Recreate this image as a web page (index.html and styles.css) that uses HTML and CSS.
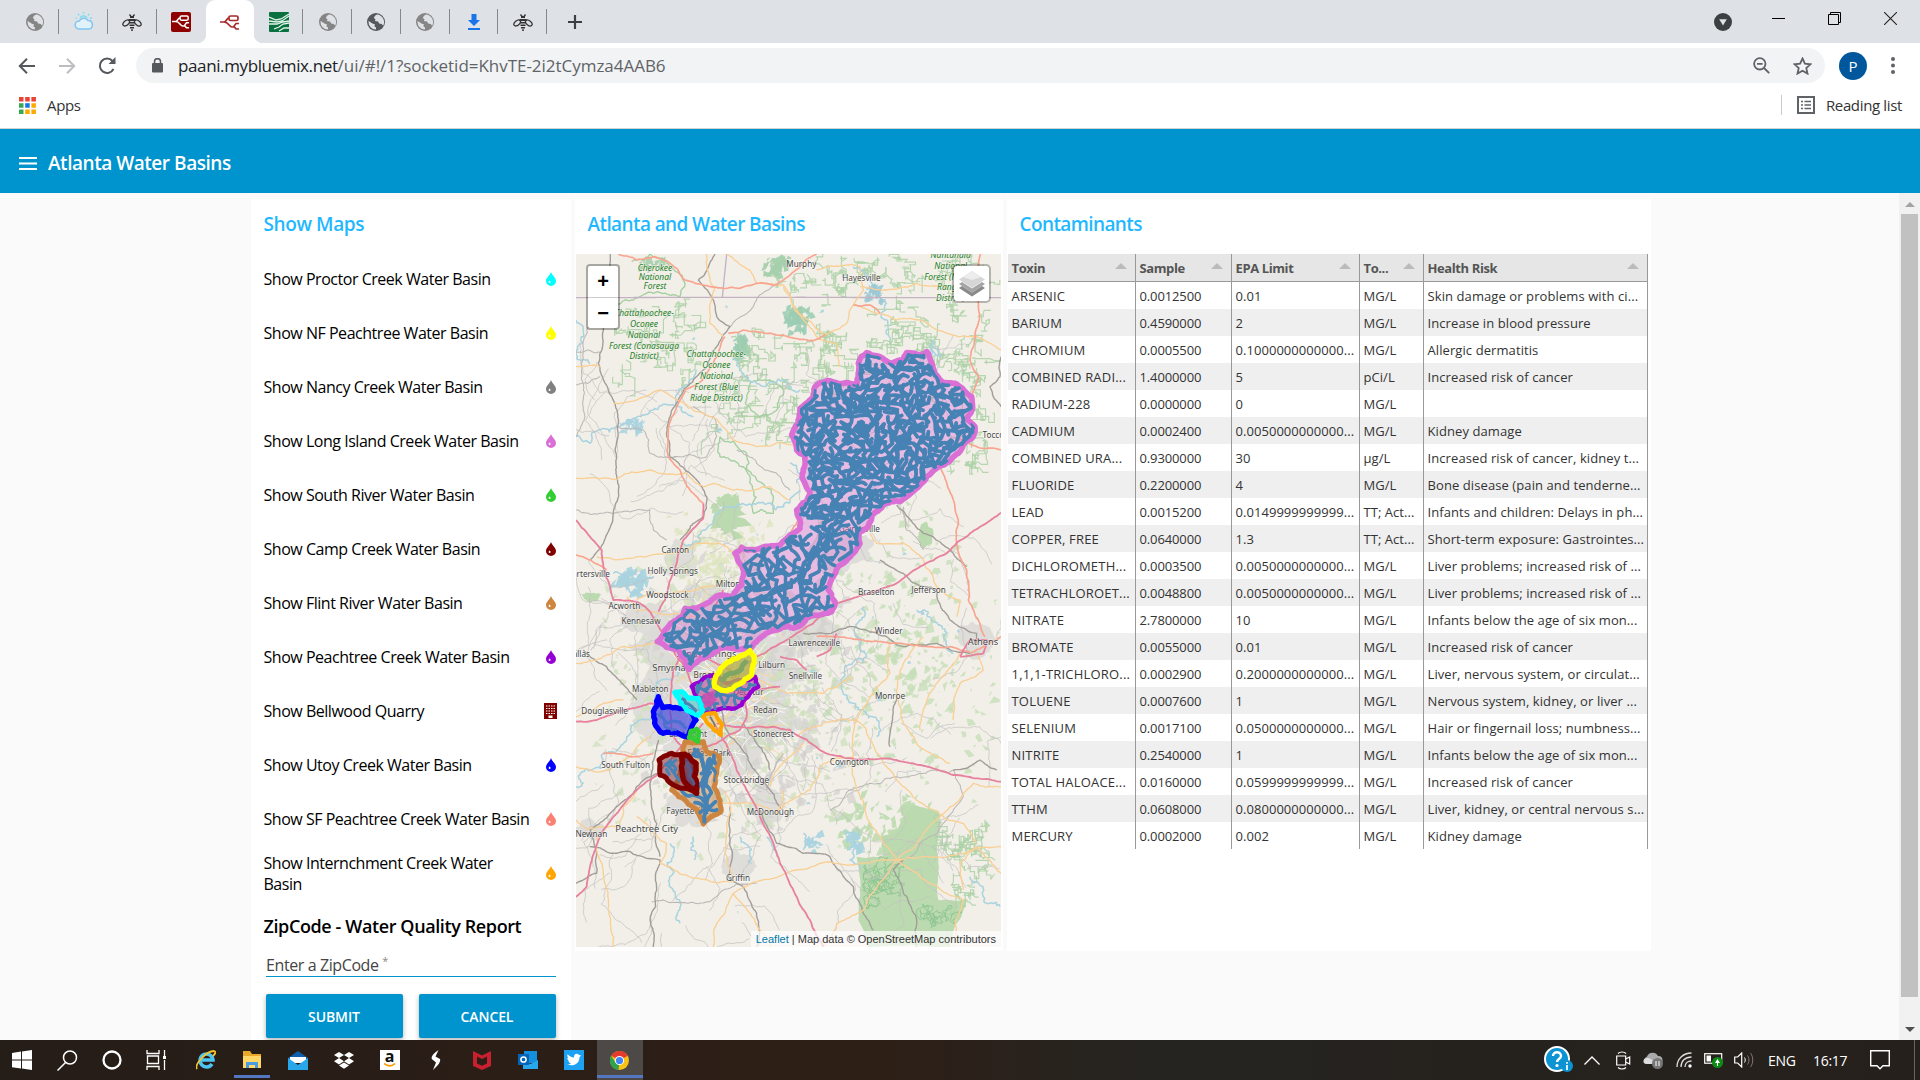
FILE: index.html
```html
<!DOCTYPE html>
<html lang="en">
<head>
<meta charset="utf-8">
<title>Atlanta Water Basins</title>
<link rel="stylesheet" href="styles.css">
</head>
<body>
<svg class="defs" width="0" height="0" aria-hidden="true">
  <symbol id="drop" viewBox="0 0 10 14"><path fill="currentColor" d="M5 0C5.6 2.700 10 5.800 10 9a5 5 0 0 1-10 0C0 5.800 4.400 2.700 5 0z"/><path fill="#fff" d="M3.700 8.200c.2.700.9 1.100.9 1.900a1 1 0 0 1-2 0c0-.8.9-1.200 1.100-1.900z"/></symbol>
  <symbol id="globe" viewBox="0 0 18 18"><circle cx="9" cy="9" r="9" fill="currentColor"/><path fill="#dee1e6" d="M10 1.600c-2 1-2.500 2-3.200 3.300l1.700 1.300-.6 1.700 3.200.5 1 2 2.700.6 1.300 1.800A7.500 7.500 0 0 0 10 1.600zM1.600 8l4.300 2.700 2 .6-.5 2 1.600 1.200v2A7.500 7.500 0 0 1 1.600 8z"/></symbol>
  <symbol id="bee" viewBox="0 0 20 18"><g fill="none" stroke="#333" stroke-width="1.300"><ellipse cx="4.200" cy="10" rx="3.800" ry="2.300" transform="rotate(-40 4.200 10)"/><ellipse cx="15.800" cy="10" rx="3.800" ry="2.300" transform="rotate(40 15.800 10)"/><path d="M7.500 1.500l1.500 2M12.500 1.500l-1.500 2"/></g><path fill="#333" d="M8 3h4v2H8zM6.500 6h7v2h-7zM7.500 9h5v1.500h-5zM7.500 11.500h5V13h-5zM8 14h4v1.400H8zM9.200 16.200h1.600V18H9.200z"/></symbol>
  <symbol id="flow" viewBox="0 0 20 16"><g fill="none" stroke="currentColor" stroke-width="1.700"><rect x="9" y="2" width="9" height="4.500" rx="1.500"/><path d="M0 8h4c3 0 2-4 5-4M4 8c5 0 5 5 8 5h2M19 9.500h-3l-2 2.800 2 2.700h3"/></g></symbol>
</svg>

<header class="browser">
  <div class="tabs">
    <div class="tab"><svg class="ico gl" ><use href="#globe"/></svg></div>
    <div class="tab"><svg class="ico20" viewBox="0 0 20 20"><path d="M5 17a4 4 0 0 1 .3-8A5 5 0 0 1 14 8.500a4.300 4.300 0 0 1 1 8.500z" fill="#e2f2fb" stroke="#83c5ef" stroke-width="1.500"/><path d="M6 6a4 4 0 0 1 7 0M9.500 0v1.800M4 2l1 1.300M15 2l-1 1.300M1.500 6l1.500.5M18 6l-2 .5" stroke="#6fdff0" stroke-width="1.300" fill="none"/></svg></div>
    <div class="tab"><svg class="ico20"><use href="#bee"/></svg></div>
    <div class="tab nosep"><span class="nr"><svg width="18" height="15"><use href="#flow"/></svg></span></div>
    <div class="tab active"><svg class="red" width="20" height="16"><use href="#flow"/></svg></div>
    <div class="tab"><svg class="ico20" viewBox="0 0 20 20"><rect width="20" height="20" rx="1" fill="#08713f"/><path d="M0 5l7 3 5-1 8-5M0 9l8 1 5-1 7-5M0 12h8l6-2 6-1M5 17l5-2 4-3 6-1M10 19l5-3h5" stroke="#e4f5ea" stroke-width="1.300" fill="none"/></svg></div>
    <div class="tab"><svg class="ico gl"><use href="#globe"/></svg></div>
    <div class="tab"><svg class="ico gd"><use href="#globe"/></svg></div>
    <div class="tab"><svg class="ico gl"><use href="#globe"/></svg></div>
    <div class="tab"><svg class="ico" viewBox="0 0 18 18"><path fill="#1a73e8" d="M6.500 1h5v6H15l-6 6-6-6h3.500zM3 15h12v2H3z"/></svg></div>
    <div class="tab"><svg class="ico20"><use href="#bee"/></svg></div>
    <div class="plus"><svg width="14" height="14" viewBox="0 0 14 14"><path d="M7 0v14M0 7h14" stroke="#3c4043" stroke-width="2.200"/></svg></div>
    <div class="winbtns">
      <svg class="media" width="18" height="18" viewBox="0 0 18 18"><circle cx="9" cy="9" r="9" fill="#3c4043"/><path d="M5.200 6.200h7.600L9 12.500z" fill="#dee1e6"/></svg>
      <svg width="13" height="13" viewBox="0 0 13 13"><path d="M0 6.500h13" stroke="#000"/></svg>
      <svg width="13" height="13" viewBox="0 0 13 13"><path d="M.5 2.500h10v10H.5zM2.500 2.500v-2h10v10h-2" fill="none" stroke="#000"/></svg>
      <svg width="13" height="13" viewBox="0 0 13 13"><path d="M0 0l13 13M13 0L0 13" stroke="#222" stroke-width="1.100"/></svg>
    </div>
  </div>
  <div class="toolbar">
    <div class="nav">
      <svg width="18" height="16" viewBox="0 0 18 16"><path d="M17 8H2M9 .8L1.800 8 9 15.200" fill="none" stroke="#55595d" stroke-width="2"/></svg>
      <svg width="18" height="16" viewBox="0 0 18 16"><path d="M1 8h15M9 .8L16.200 8 9 15.200" fill="none" stroke="#bcbec1" stroke-width="2"/></svg>
      <svg width="18" height="18" viewBox="0 0 18 18"><path d="M15.500 12A7.200 7.200 0 1 1 14.500 4" fill="none" stroke="#55595d" stroke-width="2"/><path d="M17.500 0v7h-7z" fill="#55595d"/></svg>
    </div>
    <div class="omnibox">
      <svg class="lock" width="11" height="15" viewBox="0 0 11 15"><rect y="5" width="11" height="9.500" rx="1" fill="#55595d"/><path d="M2.500 6V3.700a3 3 0 0 1 6 0V6" fill="none" stroke="#55595d" stroke-width="1.500"/></svg>
      <span class="url"><b>paani.mybluemix.net</b>/ui/#!/1?socketid=KhvTE-2i2tCymza4AAB6</span>
      <svg class="mag" width="17" height="17" viewBox="0 0 17 17"><g fill="none" stroke="#5f6368" stroke-width="1.800"><circle cx="6.800" cy="6.800" r="5.700"/><path d="M11 11l5.200 5.200M4 6.800h5.600"/></g></svg>
      <svg width="19" height="18" viewBox="0 0 19 18"><path d="M9.500 1.500l2.400 5.200 5.500.6-4.100 3.800 1.200 5.500-5-2.900-5 2.900 1.200-5.500L1.600 7.300l5.500-.6z" fill="none" stroke="#5f6368" stroke-width="1.800"/></svg>
    </div>
    <span class="avatar">P</span>
    <svg class="dots" width="4" height="17" viewBox="0 0 4 17"><g fill="#5f6368"><circle cx="2" cy="2" r="2"/><circle cx="2" cy="8.500" r="2"/><circle cx="2" cy="15" r="2"/></g></svg>
  </div>
  <div class="bookmarks">
    <svg width="17" height="17" viewBox="0 0 17 17"><path fill="#ea4335" d="M0 0h4.500v4.500H0zM6.200 0h4.500v4.500H6.200zM12.400 0h4.500v4.500h-4.500z"/><path fill="#34a853" d="M0 6.200h4.500v4.500H0zM0 12.400h4.500v4.500H0z"/><path fill="#1a73e8" d="M6.200 6.200h4.500v4.500H6.200z"/><path fill="#fbab00" d="M12.400 6.200h4.500v4.500h-4.500zM6.200 12.400h4.500v4.500H6.200zM12.400 12.400h4.500v4.500h-4.500z"/></svg>
    <span class="apps">Apps</span>
    <span class="bmdiv"></span>
    <svg width="18" height="18" viewBox="0 0 18 18"><rect x="1" y="1" width="16" height="16" fill="none" stroke="#5f6368" stroke-width="2"/><path d="M4 5.500h2M4 9h2M4 12.500h2M7.500 5.500H14M7.500 9H14M7.500 12.500H14" stroke="#5f6368" stroke-width="1.600"/></svg>
    <span class="reading">Reading list</span>
  </div>
</header>

<div class="appbar">
  <svg width="18" height="13" viewBox="0 0 18 13"><path d="M0 1h18M0 6.500h18M0 12h18" stroke="#fff" stroke-width="2"/></svg>
  <h1>Atlanta Water Basins</h1>
</div>

<div class="viewport">
<main class="board">
  <section class="card maps">
    <h2>Show Maps</h2>
    <ul class="basins">
      <li><span>Show Proctor Creek Water Basin</span><svg class="drop aqua"><use href="#drop"/></svg></li>
      <li><span>Show NF Peachtree Water Basin</span><svg class="drop yellow"><use href="#drop"/></svg></li>
      <li><span>Show Nancy Creek Water Basin</span><svg class="drop gray"><use href="#drop"/></svg></li>
      <li><span>Show Long Island Creek Water Basin</span><svg class="drop orchid"><use href="#drop"/></svg></li>
      <li><span>Show South River Water Basin</span><svg class="drop lime"><use href="#drop"/></svg></li>
      <li><span>Show Camp Creek Water Basin</span><svg class="drop maroon"><use href="#drop"/></svg></li>
      <li><span>Show Flint River Water Basin</span><svg class="drop peru"><use href="#drop"/></svg></li>
      <li><span>Show Peachtree Creek Water Basin</span><svg class="drop violet"><use href="#drop"/></svg></li>
      <li><span>Show Bellwood Quarry</span><svg class="quarry" viewBox="0 0 13 16"><path fill="#800000" d="M0 0h13v16H0z"/><path stroke="#fff" stroke-width="1.200" stroke-dasharray="1.500 1" d="M2 3h9.500M2 5.500h9.500M2 8h9.500M2 10.500h9.500"/><path fill="#fff" d="M4.500 12.500h4V15h-4z"/></svg></li>
      <li><span>Show Utoy Creek Water Basin</span><svg class="drop blue"><use href="#drop"/></svg></li>
      <li><span>Show SF Peachtree Creek Water Basin</span><svg class="drop salmon"><use href="#drop"/></svg></li>
      <li><span>Show Internchment Creek Water<br>Basin</span><svg class="drop orange"><use href="#drop"/></svg></li>
    </ul>
    <h3>ZipCode - Water Quality Report</h3>
    <div class="field">Enter a ZipCode <sup>*</sup></div>
    <div class="buttons"><button>SUBMIT</button><button>CANCEL</button></div>
  </section>

  <section class="card mapcard">
    <h2>Atlanta and Water Basins</h2>
    <div class="map">
      <svg id="map" width="425" height="693" viewBox="18 192 1275 2079">
        <rect x="18" y="192" width="1275" height="2079" fill="#f2efe9"/>
        <g id="terrain"></g>
        <g id="roads"></g>
        <g id="labels"></g>
        <g id="overlays"></g>
      </svg>
      <div class="zoomctl"><span>+</span><span>−</span></div>
      <div class="layers"><svg width="26" height="26" viewBox="0 0 26 26"><path d="M0 17l13 8.500L26 17l-3-2-10 6.500L3 15z" fill="#8a8a8a"/><path d="M0 13l13 8.500L26 13l-3-2-10 6.500L3 11z" fill="#a5a5a5"/><path d="M0 8.500L13 0l13 8.500L13 17z" fill="#d6d6d6"/><path d="M4 6L13 0l9 6-9 3z" fill="#ececec"/></svg></div>
      <div class="attribution"><a>Leaflet</a> | Map data © OpenStreetMap contributors</div>
    </div>
  </section>

  <section class="card tablecard">
    <h2>Contaminants</h2>
    <table>
      <colgroup><col class="c1"><col class="c2"><col class="c3"><col class="c4"><col class="c5"></colgroup>
      <thead><tr><th>Toxin</th><th>Sample</th><th>EPA Limit</th><th>To...</th><th>Health Risk</th></tr></thead>
      <tbody>
        <tr><td>ARSENIC</td><td>0.0012500</td><td>0.01</td><td>MG/L</td><td>Skin damage or problems with ci...</td></tr>
        <tr><td>BARIUM</td><td>0.4590000</td><td>2</td><td>MG/L</td><td>Increase in blood pressure</td></tr>
        <tr><td>CHROMIUM</td><td>0.0005500</td><td>0.1000000000000...</td><td>MG/L</td><td>Allergic dermatitis</td></tr>
        <tr><td>COMBINED RADI...</td><td>1.4000000</td><td>5</td><td>pCi/L</td><td>Increased risk of cancer</td></tr>
        <tr><td>RADIUM-228</td><td>0.0000000</td><td>0</td><td>MG/L</td><td></td></tr>
        <tr><td>CADMIUM</td><td>0.0002400</td><td>0.0050000000000...</td><td>MG/L</td><td>Kidney damage</td></tr>
        <tr><td>COMBINED URA...</td><td>0.9300000</td><td>30</td><td>µg/L</td><td>Increased risk of cancer, kidney t...</td></tr>
        <tr><td>FLUORIDE</td><td>0.2200000</td><td>4</td><td>MG/L</td><td>Bone disease (pain and tenderne...</td></tr>
        <tr><td>LEAD</td><td>0.0015200</td><td>0.0149999999999...</td><td>TT; Act...</td><td>Infants and children: Delays in ph...</td></tr>
        <tr><td>COPPER, FREE</td><td>0.0640000</td><td>1.3</td><td>TT; Act...</td><td>Short-term exposure: Gastrointes...</td></tr>
        <tr><td>DICHLOROMETH...</td><td>0.0003500</td><td>0.0050000000000...</td><td>MG/L</td><td>Liver problems; increased risk of ...</td></tr>
        <tr><td>TETRACHLOROET...</td><td>0.0048800</td><td>0.0050000000000...</td><td>MG/L</td><td>Liver problems; increased risk of ...</td></tr>
        <tr><td>NITRATE</td><td>2.7800000</td><td>10</td><td>MG/L</td><td>Infants below the age of six mon...</td></tr>
        <tr><td>BROMATE</td><td>0.0055000</td><td>0.01</td><td>MG/L</td><td>Increased risk of cancer</td></tr>
        <tr><td>1,1,1-TRICHLORO...</td><td>0.0002900</td><td>0.2000000000000...</td><td>MG/L</td><td>Liver, nervous system, or circulat...</td></tr>
        <tr><td>TOLUENE</td><td>0.0007600</td><td>1</td><td>MG/L</td><td>Nervous system, kidney, or liver ...</td></tr>
        <tr><td>SELENIUM</td><td>0.0017100</td><td>0.0500000000000...</td><td>MG/L</td><td>Hair or fingernail loss; numbness...</td></tr>
        <tr><td>NITRITE</td><td>0.2540000</td><td>1</td><td>MG/L</td><td>Infants below the age of six mon...</td></tr>
        <tr><td>TOTAL HALOACE...</td><td>0.0160000</td><td>0.0599999999999...</td><td>MG/L</td><td>Increased risk of cancer</td></tr>
        <tr><td>TTHM</td><td>0.0608000</td><td>0.0800000000000...</td><td>MG/L</td><td>Liver, kidney, or central nervous s...</td></tr>
        <tr><td>MERCURY</td><td>0.0002000</td><td>0.002</td><td>MG/L</td><td>Kidney damage</td></tr>
      </tbody>
    </table>
  </section>
</main>
<div class="scrollbar"><i class="up"></i><b></b><i class="down"></i></div>
</div>

<footer class="taskbar">
  <div class="apps-row">
    <span><svg width="20" height="20" viewBox="0 0 20 20"><path fill="#fff" d="M0 3l9-1.400v8H0zM10 1.400L20 0v9.600H10zM0 10.600h9v8L0 17.200zM10 10.600h10V20l-10-1.400z"/></svg></span>
    <span><svg width="21" height="21" viewBox="0 0 21 21"><g fill="none" stroke="#fff" stroke-width="1.500"><circle cx="13" cy="7.500" r="6.500"/><path d="M8.500 12.500L.5 20.500"/></g></svg></span>
    <span><svg width="20" height="20" viewBox="0 0 20 20"><circle cx="10" cy="10" r="8.500" fill="none" stroke="#fff" stroke-width="2.300"/></svg></span>
    <span><svg width="21" height="20" viewBox="0 0 21 20"><path d="M1 0v3.500h12V0M1 20v-3.500h12V20M1.500 6h11v7.500h-11zM18.500 0v6M18.500 10v10" fill="none" stroke="#fff" stroke-width="1.300"/><path fill="#fff" d="M17 6h3v3h-3z"/></svg></span>
    <span><svg width="20" height="20" viewBox="0 0 20 20"><path d="M16 14a6.500 6.500 0 1 1 1-4H5" fill="none" stroke="#4cc5f3" stroke-width="3.500"/><path d="M1 19C-2 15 10 1 18 1c3 1 0 4-1 5" fill="none" stroke="#f7c52b" stroke-width="1.800"/></svg></span>
    <span class="open"><svg width="20" height="18" viewBox="0 0 20 18"><path fill="#e8a92b" d="M1 0h7l2 3h9v14H1z"/><path fill="#ffd766" d="M1 5h18v12H1z"/><path d="M4 17v-6h12v6h-3v-3H7v3z" fill="#4a9be0"/></svg></span>
    <span><svg width="20" height="19" viewBox="0 0 20 19"><path fill="#0f5fae" d="M0 7l10-7 10 7v5H0z"/><path fill="#fff" d="M2 6h16v6H2z"/><path fill="#28a8ea" d="M0 7l10 7 10-7v12H0z"/></svg></span>
    <span><svg width="20" height="17" viewBox="0 0 20 17"><path fill="#fff" d="M5 0l5 3-5 3-5-3zM15 0l5 3-5 3-5-3zM5 6l5 3.200-5 3.200-5-3.200zM15 6l5 3.200-5 3.200-5-3.200zM10 10.500l5 3-5 3.200-5-3.200z"/></svg></span>
    <span><span class="amz">a<svg width="12" height="4" viewBox="0 0 12 4"><path d="M0 .5c4 3 8 3 11 0" fill="none" stroke="#f90" stroke-width="1.500"/></svg></span></span>
    <span><svg width="10" height="20" viewBox="0 0 10 20"><path fill="#fff" d="M7.500 0C3 3 0 6 .8 9l4.200 3.500L2 20c5-4.500 8-8 7-11L4.500 6.500z"/></svg></span>
    <span><svg width="18" height="19" viewBox="0 0 18 19"><path fill="#c8202f" d="M0 0l9 4.500L18 0v15l-9 4-9-4zM4 5.500v7l5 2.300 5-2.300v-7L9 8z"/></svg></span>
    <span><svg width="20" height="18" viewBox="0 0 20 18"><path fill="#1490df" d="M6 0h13v12H6z"/><path fill="#28a8ea" d="M5 9l7.500 4L20 9v9H5z"/><rect y="3" width="11" height="11" fill="#0364b8"/><circle cx="5.500" cy="8.500" r="2.600" fill="none" stroke="#fff" stroke-width="1.500"/></svg></span>
    <span><svg width="20" height="20" viewBox="0 0 20 20"><path fill="#1da1f2" d="M0 0h20v20H0z"/><path fill="#fff" d="M17 5.500l-1.500 1.700c0 6-5.500 9.800-12.500 7.300 2 0 3-.4 4-1.200-1.500-.2-2.200-1-2.600-2h1.200C4 10.500 3.300 9.400 3.300 8l1.200.3C3.200 7.200 3 5.500 3.700 4.300c1.600 2 3.700 3 6.300 3.200C9.500 4 13 2.800 14.800 4.800z"/></svg></span>
    <span class="open current"><svg width="19" height="19" viewBox="0 0 20 20"><circle cx="10" cy="10" r="10" fill="#fbc116"/><path fill="#e33b2e" d="M10 10L1.300 5a10 10 0 0 1 17.400 0z"/><path fill="#30a14e" d="M10 10l-1 10A10 10 0 0 1 1.300 5l4.400 7z"/><circle cx="10" cy="10" r="4.800" fill="#fff"/><circle cx="10" cy="10" r="3.800" fill="#4285f4"/></svg></span>
  </div>
  <div class="tray">
    <svg class="t-help" width="29" height="28" viewBox="0 0 29 28"><circle cx="13" cy="13" r="12" fill="#0d93d2" stroke="#fff" stroke-width="2"/><path d="M9 10c0-5 8-5 8 0 0 3-4 3-4 6" fill="none" stroke="#fff" stroke-width="2.400"/><circle cx="13" cy="19.500" r="1.600" fill="#fff"/><circle cx="23" cy="20" r="6" fill="#0d93d2"/><path d="M23 16v1.800M23 19v5" stroke="#fff" stroke-width="1.700"/></svg>
    <svg class="t-up" width="16" height="9" viewBox="0 0 16 9"><path d="M.5 8.500L8 1l7.500 7.500" fill="none" stroke="#fff" stroke-width="1.300"/></svg>
    <svg class="t-cam" width="15" height="19" viewBox="0 0 15 19"><path d="M.7 5h9v9h-9zM9.700 8l4-2v7l-4-2M2 2.500C4 .5 8 .5 10 2.500M2 16.500c2 2 6 2 8 0" fill="none" stroke="#fff" stroke-width="1.200"/></svg>
    <svg class="t-cloud" width="20" height="17" viewBox="0 0 20 17"><path fill="#aaa" d="M4 12a4 4 0 0 1 0-7.500A6 6 0 0 1 15 4a4 4 0 0 1 1 8z"/><path fill="#ddd" d="M3 12a3 3 0 0 1 1-6c4 0 5 2 9 6z"/><circle cx="14.500" cy="11.500" r="5.500" fill="#777"/><path d="M13 9v5M16 9v5" stroke="#fff"/></svg>
    <svg class="t-wifi" width="17" height="16" viewBox="0 0 17 16"><g fill="none" stroke="#ddd" stroke-width="1.300"><path d="M1 15C1 7 7 1 15.500 1M5 15C5 9 9 5 15.500 5M9 15c0-4 3-6 6.500-6"/></g><circle cx="14" cy="14" r="1.700" fill="#fff"/></svg>
    <svg class="t-bat" width="20" height="16" viewBox="0 0 20 16"><rect x=".7" y="1.700" width="17" height="9.500" fill="none" stroke="#fff" stroke-width="1.200"/><path fill="#fff" d="M2.500 3.500H7v6H2.500z"/><circle cx="13.500" cy="10.500" r="5.500" fill="#0e8a16"/><path fill="#fff" d="M13.500 7l2.500 4h-2v3h-1v-3h-2z"/></svg>
    <svg class="t-vol" width="20" height="16" viewBox="0 0 20 16"><path d="M.7 5h3l4-4v14l-4-4h-3z" fill="none" stroke="#fff" stroke-width="1.200"/><path d="M10.500 5.500c1 1.500 1 3.500 0 5" stroke="#fff" fill="none"/><path d="M13.500 3.500c2 3 2 6 0 9M16.500 1c3 4 3 10 0 14" stroke="#877" fill="none"/></svg>
    <span class="lang">ENG</span><span class="clock">16:17</span>
    <svg class="t-note" width="20" height="20" viewBox="0 0 20 20"><path d="M.7.7h18.600v15H13l-3 3-3-3H.7z" fill="none" stroke="#fff" stroke-width="1.400"/></svg>
    <span class="peek"></span>
  </div>
</footer>
<script src="map.js"></script>
</body>
</html>
```
FILE: styles.css
```css
* { box-sizing: border-box; }
body { margin: 0; width: 1920px; height: 1080px; overflow: hidden; display: flex; flex-direction: column; font-family: "Open Sans", "Noto Sans", sans-serif; background: #fafafa; color: #000; }
svg { display: block; flex: none; }
.defs { display: none; }
h1, h2, h3, ul { margin: 0; padding: 0; }

.browser { height: 129px; background: #fff; border-bottom: 1px solid #d3d3d3; flex: none; }
.tabs { height: 43px; background: #dee1e6; display: flex; padding-left: 10.500px; }
.tab { width: 48.800px; height: 43px; display: flex; align-items: center; justify-content: center; position: relative; }
.tab::after { content: ""; position: absolute; right: 0; top: 9px; width: 1px; height: 25px; background: #85888d; }
.tab.nosep::after, .tab.active::after { display: none; }
.tab.active { background: #fff; border-radius: 9px 9px 0 0; }
.tab.active::before { content: ""; position: absolute; left: -9px; right: -9px; bottom: 0; height: 9px; background: radial-gradient(circle at 0 0, #dee1e6 9px, #fff 9.500px) left / 9px 9px no-repeat, radial-gradient(circle at 100% 0, #dee1e6 9px, #fff 9.500px) right / 9px 9px no-repeat; }
.ico { width: 18px; height: 18px; }
.ico20 { width: 20px; height: 20px; }
.gl { color: #858585; }
.gd { color: #55595d; }
.red { color: #a52a2a; position: relative; }
.nr { width: 20px; height: 20px; border-radius: 2px; background: #8f0000; color: #fff; display: grid; place-items: center; }
.plus { width: 55px; display: grid; place-items: center; }
.winbtns { margin-left: auto; display: flex; align-items: center; gap: 43px; padding: 0 23px 6px 0; }
.winbtns .media { margin: 6px -3px 0 0; }
.toolbar { height: 45px; display: flex; align-items: center; padding-left: 18px; }
.nav { display: flex; gap: 22px; align-items: center; width: 118px; }
.omnibox { width: 1689px; height: 35px; border-radius: 18px; background: #f1f3f4; display: flex; align-items: center; padding: 0 13px 0 16px; }
.lock { margin-right: 15px; }
.url { font-size: 17px; color: #5f6368; letter-spacing: -.03px; flex: 1; white-space: nowrap; }
.url b { font-weight: 400; color: #202124; letter-spacing: -.38px; }
.mag { margin-right: 23px; }
.avatar { width: 28px; height: 28px; margin-left: 14px; border-radius: 50%; background: #01579b; color: #fff; font-size: 15px; line-height: 28px; text-align: center; }
.dots { margin-left: 24px; }
.bookmarks { height: 40px; display: flex; align-items: center; padding: 0 18px 6px 19px; font-size: 15px; color: #333; letter-spacing: -.35px; }
.apps { margin-left: 11px; }
.bmdiv { width: 1px; height: 20px; background: #c8cacd; margin: 0 15px 0 auto; }
.reading { margin-left: 11px; }

.appbar { height: 64px; flex: none; background: #0094ce; color: #fff; display: flex; align-items: center; gap: 11px; padding: 4px 0 0 19px; }
h1 { font-size: 19px; font-weight: 600; letter-spacing: -.46px; }

.viewport { height: 847px; flex: none; display: flex; justify-content: space-between; overflow: hidden; }
.board { display: flex; gap: 4px; padding: 6px 0 0 251px; align-items: flex-start; }
.card { background: #fff; }
.card h2 { height: 55px; font-size: 19px; line-height: 51px; font-weight: 600; color: #1fb8ff; letter-spacing: -.6px; padding-left: 12.500px; white-space: nowrap; }
.maps { width: 320px; height: 860px; }
.maps h2 { letter-spacing: -.4px; }
.basins { list-style: none; }
.basins li { height: 54px; display: flex; align-items: center; justify-content: space-between; padding: 0 14px 0 12.500px; font-size: 16px; line-height: 21px; letter-spacing: -.47px; white-space: nowrap; }
.basins span { margin-bottom: 3px; }
.drop { width: 10px; height: 14px; margin: 0 1px 4px 0; }
.quarry { width: 13px; height: 16px; margin: 0 0 4px 0; }
.aqua { color: #0ff; } .yellow { color: #ff0; } .gray { color: #808080; } .orchid { color: #da70d6; }
.lime { color: #32cd32; } .maroon { color: #800000; } .peru { color: #cd853f; } .violet { color: #9400d3; }
.blue { color: #00f; } .salmon { color: #fa8072; } .orange { color: #ffa500; }
h3 { height: 54px; line-height: 48px; padding-left: 12.500px; font-size: 18px; font-weight: 600; letter-spacing: -.39px; white-space: nowrap; }
.field { margin: 0 15px; height: 21px; line-height: 18px; font-size: 16px; color: #444; letter-spacing: -.4px; border-bottom: 1px solid #0094ce; white-space: nowrap; }
.field sup { font-size: 11px; color: #888; line-height: 0; }
.buttons { display: flex; gap: 16px; padding: 17px 15px 0; }
.buttons button { width: 137px; height: 44px; border: 0; border-radius: 2px; padding: 0 1px 0 0; background: #0094ce; color: #fff; font: 600 14px "Open Sans", sans-serif; letter-spacing: -.1px; box-shadow: 0 2px 5px rgba(0,0,0,.3); }

.mapcard { width: 428px; height: 752px; }
.map { position: relative; width: 425px; height: 693px; margin-left: 1px; overflow: hidden; }
.mapcard .map text { font-family: "Noto Sans", sans-serif; }
.zoomctl { position: absolute; left: 10px; top: 10px; width: 34px; border: 2px solid rgba(0,0,0,.3); border-radius: 4px; background-clip: padding-box; background-color: #fff; }
.zoomctl span { display: block; height: 31px; font: bold 20px/30px "Liberation Sans", sans-serif; text-align: center; }
.zoomctl span + span { border-top: 1px solid #ccc; }
.layers { position: absolute; right: 10px; top: 10px; width: 39px; height: 39px; display: grid; place-items: center; background-clip: padding-box; background-color: #fff; border: 2px solid rgba(0,0,0,.25); border-radius: 5px; }
.attribution { position: absolute; right: 0; bottom: 0; height: 16px; padding: 0 5px; background: rgba(255,255,255,.7); font: 11px/16px "Liberation Sans", sans-serif; color: #333; white-space: nowrap; }
.attribution a { color: #0078a8; }

.tablecard { width: 644px; height: 752px; }
table { margin-left: 1px; width: 640px; table-layout: fixed; border-collapse: separate; border-spacing: 0; font-size: 13px; color: #333; letter-spacing: .05px; }
.c1 { width: 128px; } .c2 { width: 96px; } .c3 { width: 128px; } .c4 { width: 64px; } .c5 { width: 224px; }
th, td { padding: 1px 0 0 3.500px; text-align: left; border-right: 1px solid #999; overflow: hidden; white-space: nowrap; }
th { height: 28px; background: #e6e6e6; border-bottom: 1px solid #999; color: #555; font-weight: 700; position: relative; letter-spacing: -.4px; }
th::after { content: ""; position: absolute; right: 8px; top: 9px; border: 6px solid transparent; border-top: 0; border-bottom-color: #bbb; }
td { height: 27px; }
td:nth-child(1) { letter-spacing: .2px; }
td:nth-child(2) { letter-spacing: -.12px; }
td:nth-child(5) { letter-spacing: .09px; }
tbody tr:nth-child(even) { background: #efefef; }

.scrollbar { width: 21px; background: #f1f1f1; display: flex; flex-direction: column; align-items: center; }
.scrollbar i { border: 5px solid transparent; }
.scrollbar .up { border-top: 0; border-bottom-color: #a3a3a3; margin: 9px 0 7px; }
.scrollbar b { width: 17px; height: 783px; background: #c1c1c1; }
.scrollbar .down { border-bottom: 0; border-top-color: #505050; margin-top: 30px; }

.taskbar { height: 40px; background: linear-gradient(90deg, #251d18, #2e1f16 45%, #252420 60%, #26201c); display: flex; justify-content: space-between; color: #fff; }
.apps-row { display: flex; }
.apps-row > span { width: 46px; height: 40px; display: grid; place-items: center; position: relative; }
.apps-row > span:nth-child(-n+4) { width: 44.800px; }
.apps-row > span:nth-child(5) { margin-left: 3.500px; }
.open::after { content: ""; position: absolute; left: 5px; right: 5px; bottom: 2px; height: 3px; background: #5477c4; }
.current { background: #4d4946; }
.current::after { left: 0; right: 0; }
.amz { width: 20px; height: 20px; background: #fff; color: #111; font: bold 16px/12px "Open Sans", sans-serif; text-align: center; display: flex; flex-direction: column; align-items: center; gap: 1px; }
.tray { display: flex; align-items: center; font-size: 14px; letter-spacing: -.3px; height: 40px; }
.t-help { margin-right: 11px; } .t-up { margin-right: 16px; } .t-cam { margin-right: 12px; } .t-cloud { margin-right: 13px; }
.t-wifi { margin-right: 11px; } .t-bat { margin-right: 10px; } .t-vol { margin-right: 14px; }
.lang { width: 45px; } .clock { width: 57px; }
.peek { width: 1px; height: 40px; background: #6a6460; margin: 0 5px 0 24px; }
```
FILE: map.js
```js
(function () {
  const NS = "http://www.w3.org/2000/svg";
  let seed = 71;
  const rnd = () => (seed = (seed * 16807) % 2147483647) / 2147483647;
  const sym = a => (rnd() - .5) * 2 * a;
  const el = (parent, tag, attrs, text) => {
    const n = document.createElementNS(NS, tag);
    for (const k in attrs) n.setAttribute(k, attrs[k]);
    if (text) n.textContent = text;
    parent.appendChild(n);
    return n;
  };
  const layer = id => document.getElementById(id);
  const parse = s => s.trim().split(/\s+/).map(p => p.split(",").map(Number));
  const toD = (p, close) => "M" + p.map(q => q[0].toFixed(1) + " " + q[1].toFixed(1)).join("L") + (close ? "Z" : "");
  // Recursive midpoint displacement turns a coarse line into a natural one.
  const rough = (p, amount, min) => {
    const out = [p[0]];
    for (let i = 1; i < p.length; i++) {
      const split = (a, b) => {
        const d = Math.hypot(b[0] - a[0], b[1] - a[1]);
        if (d < min) { out.push(b); return; }
        const m = [(a[0] + b[0]) / 2 + sym(d * amount), (a[1] + b[1]) / 2 + sym(d * amount)];
        split(a, m); split(m, b);
      };
      split(p[i - 1], p[i]);
    }
    return out;
  };
  const inside = (x, y, poly) => {
    let c = false;
    for (let i = 0, j = poly.length - 1; i < poly.length; j = i++) {
      const a = poly[i], b = poly[j];
      if ((a[1] > y) !== (b[1] > y) && x < (b[0] - a[0]) * (y - a[1]) / (b[1] - a[1]) + a[0]) c = !c;
    }
    return c;
  };
  const line = (g, s, color, width, amount, opacity) =>
    el(g, "path", { d: toD(rough(typeof s === "string" ? parse(s) : s, amount || .1, 9)), fill: "none", stroke: color, "stroke-width": width, "stroke-linejoin": "round", opacity: opacity || 1 });

  // --- terrain ---
  const t = layer("terrain");
  const blob = (cx, cy, rx, ry, color, op) => {
    const p = [];
    for (let a = 0; a < 6.28; a += .45) p.push([cx + Math.cos(a) * rx * (1 + sym(.3)), cy + Math.sin(a) * ry * (1 + sym(.3))]);
    p.push(p[0]);
    el(t, "path", { d: toD(rough(p, .22, 8), true), fill: color, opacity: op || 1 });
  };
  const speckle = (n, x0, y0, x1, y1, r, color, op) => {
    for (let i = 0; i < n; i++) {
      const k = r * (.4 + rnd());
      const x = x0 + (rnd() + rnd()) / 2 * (x1 - x0), y = y0 + (rnd() + rnd()) / 2 * (y1 - y0);
      const p = [[x, y], [x + k, y + sym(k)], [x + k + sym(k), y + k], [x + sym(k), y + k * 1.3]];
      el(t, "path", { d: toD(p, true), fill: color, opacity: op });
    }
  };
  [[400, 1540, 180, 170], [330, 1370, 130, 90], [560, 1440, 140, 90], [420, 1280, 130, 80], [700, 1330, 100, 60], [480, 1650, 130, 90], [590, 1580, 90, 70], [370, 1850, 70, 60], [230, 1290, 80, 50], [330, 1120, 60, 60], [590, 1850, 50, 60], [1220, 1350, 50, 50], [500, 2030, 50, 40], [970, 2010, 50, 30], [60, 1920, 40, 30], [820, 1080, 90, 60]]
    .forEach(b => blob(b[0], b[1], b[2], b[3], "#dcdad7", .9));
  speckle(420, 180, 1020, 880, 1950, 16, "#d3d1cf", .7);
  speckle(650, 18, 1050, 1000, 2000, 12, "#cfe0bd", .75);
  speckle(300, 700, 900, 1293, 1900, 13, "#c6dfb8", .8);
  speckle(260, 250, 950, 620, 1300, 11, "#dfe5bf", .8);
  speckle(90, 780, 1800, 1100, 2000, 18, "#bedcb0", .9);
  speckle(90, 418, 905, 510, 1020, 20, "#bcdab0", 1);
  blob(1065, 1040, 22, 38, "#bcdab0"); blob(62, 1220, 28, 14, "#bcdab0");
  speckle(50, 575, 192, 660, 260, 12, "#a6cfac", .9); speckle(40, 485, 425, 525, 500, 13, "#9ccdb4", .9);
  speckle(50, 630, 335, 715, 420, 13, "#9ccdb4", .9); speckle(14, 190, 200, 290, 240, 12, "#a6cfac", .9);
  el(t, "path", { d: toD(rough(parse("1030,1845 1105,1862 1105,2130 1190,2130 1160,2200 1140,2271 895,2271 865,2190 870,2120 860,2000 940,2000 935,1940 980,1925 1000,1880 1030,1845"), .06, 8), true), fill: "#bcdab0" });
  // national forest boundaries: stair-stepped loops
  const steps = (x0, y0, x1, y1, n) => {
    for (let i = 0; i < n; i++) {
      let x = x0 + rnd() * (x1 - x0), y = y0 + rnd() * (y1 - y0), d = `M${x} ${y}`;
      for (let k = 0; k < 13; k++) { d += rnd() < .5 ? `h${sym(22).toFixed(0)}` : `v${sym(22).toFixed(0)}`; if (rnd() < .3) d += `l${sym(15).toFixed(0)} ${sym(15).toFixed(0)}`; }
      el(t, "path", { d, fill: "none", stroke: "#abd1a6", "stroke-width": 3.5, opacity: .85 });
    }
  };
  steps(120, 340, 370, 600, 24); steps(500, 430, 860, 600, 34); steps(640, 200, 1230, 340, 36); steps(890, 370, 1293, 560, 36);
  steps(450, 600, 680, 780, 20); steps(1130, 560, 1270, 860, 14); steps(1115, 1900, 1240, 2110, 24);
  const loops = ["185,215 240,192 300,230 345,280 330,320 250,310 190,330 120,340", "525,640 570,680 620,660 640,600 600,570 540,580 525,640", "450,740 450,800 520,830 550,900 550,970 610,970 610,920 560,870 530,790 450,740"];
  loops.forEach(s => line(t, s, "#a3cf9f", 4, .2));
  for (let i = 0; i < 16; i++) { const x = 880 + rnd() * 90, y = 2020 + rnd() * 110; line(t, [[x, y], [x + 35, y + sym(20)], [x + 25, y + 35], [x - 5, y + 30], [x, y]], "#8fc791", 3, .35); }
  for (let i = 0; i < 9; i++) { const x = 1030 + rnd() * 120, y = 2140 + rnd() * 50; line(t, [[x, y], [x + 30, y + sym(20)], [x + 10, y + 30], [x, y]], "#8fc791", 3, .35); }
  // rivers and lakes
  ["18,740 60,760 90,720 160,700 250,660 330,650 370,680", "150,700 180,690 200,700 180,720", "320,650 360,570 380,540", "18,390 40,430 20,480 60,520", "490,500 520,550 600,575 690,600", "850,230 900,300 950,340 960,450", "1080,520 1090,450 1110,500 1080,470", "18,1790 100,1690 170,1640 260,1560 330,1440 345,1380", "130,1150 200,1190 250,1160 180,1220 150,1170 120,1210", "340,1060 400,1020 480,950 560,940 660,930 690,900", "660,820 690,850 680,880", "820,1920 850,1960 840,2010 870,2040", "510,1940 540,1990 545,2020", "590,1940 610,1980 620,2000", "700,1930 740,1960 700,1980", "1200,2060 1240,2120 1290,2150", "1040,1260 1130,1330 1150,1390", "370,1940 380,1990 375,2010", "880,1250 890,1400 870,1560 920,1640", "300,1960 310,2100 330,2200"]
    .forEach(s => line(t, s, "#a9d3df", 4.5, .3));
  speckle(30, 150, 680, 230, 730, 10, "#a9d3df", .9); speckle(40, 120, 1120, 240, 1220, 14, "#a9d3df", .9);
  speckle(20, 820, 1910, 870, 1990, 13, "#a9d3df", .9); speckle(20, 700, 1920, 750, 1990, 10, "#a9d3df", .9);
  speckle(26, 880, 270, 940, 340, 14, "#9cc9d6", .9); speckle(60, 18, 300, 1293, 2250, 6, "#a9d3df", .9);

  // --- roads ---
  const r = layer("roads");
  line(r, "18,323 1293,323", "#c4b2c4", 4, .001); line(r, "470,192 457,323", "#c4b2c4", 4, .001);
  // minor roads
  for (let i = 0; i < 150; i++) {
    const x = 18 + rnd() * 1275, y = 560 + rnd() * 1700, a = rnd() * 6.28, l = 60 + rnd() * 120;
    line(r, [[x, y], [x + Math.cos(a) * l, y + Math.sin(a) * l], [x + Math.cos(a + .5) * l * 1.7, y + Math.sin(a + .5) * l * 1.7]], "#c3c1c0", 2.6, .13, .85);
  }
  for (let i = 0; i < 120; i++) {
    const x = 250 + (rnd() + rnd()) * 220, y = 1220 + (rnd() + rnd()) * 280;
    line(r, [[x, y], [x + sym(70), y + sym(70)]], "#ffffff", 3, .1, .8);
    if (i % 2) line(r, [[x, y], [x + sym(90), y + sym(90)]], "#fbd39a", 3, .1, .9);
  }
  ["70,330 60,400 40,600 45,680 18,740", "18,487 90,487", "18,585 90,560", "140,710 220,720 240,790 320,800", "370,650 430,680 440,740 410,800 310,800", "18,960 130,970 240,960 250,1020 290,1050", "500,780 560,820 620,850 660,900", "620,280 550,350 480,410", "1000,950 1010,1020 1060,1080", "1160,760 1100,820", "245,2135 420,2135 460,2100 560,2080", "640,1690 600,1760 590,1800", "780,1860 900,1780 1050,1750 1150,1740", "1150,1740 1180,1820 1130,1890 1050,1960 980,2030"]
    .forEach(s => line(r, s, "#bbb8b6", 3.2, .12));
  ["120,192 105,400 85,520 125,620 145,700 140,800 135,950 100,1060 60,1110", "435,192 385,270 430,330 440,380 480,410 440,470 400,540 330,620 300,680 300,800 360,850 410,920 400,980 330,1050", "980,945 1060,1030 1150,1090 1190,1130", "930,1110 1000,1150 1060,1190 1100,1200 1140,1290 1220,1330 1220,1360", "700,1330 760,1330 850,1310 920,1330 1000,1370 1100,1360 1200,1390", "455,1560 480,1640 540,1720 600,1800 640,1860", "480,1850 485,1980 475,2060 520,2090 560,2170 560,2271", "570,1860 620,1960 700,1990 780,2000 850,2090 880,2170 910,2220", "265,1750 200,1790 140,1850 60,1920 80,1990 80,2050 18,2080", "60,1970 180,1985 270,2010 260,2100 240,2190 250,2271", "265,1650 240,1780 260,1900 270,2000", "1000,2010 970,2040 1000,2110 1040,2190 1040,2271", "1150,1740 1230,1710 1280,1740", "980,1520 965,1600 960,1670", "40,1380 110,1430 200,1530", "1293,500 1290,560 1260,590 1270,620 1293,650", "600,1740 560,1660 520,1600"]
    .forEach(s => line(r, s, "#a29d98", 4.2, .09));
  ["130,640 200,630 270,600 320,630 400,670 450,700 490,750 560,770 680,765", "18,530 90,530", "18,865 140,868 240,840 350,850 400,890 430,880 490,900 600,890 660,930", "410,192 420,400 460,440", "470,192 540,240 560,280 640,285 670,350 740,440 800,460 810,530", "640,290 680,360 760,435 830,400 850,345 880,300 870,230 740,240", "850,345 920,370 980,390 1050,390 1100,420 1220,440", "1220,440 1293,480", "870,290 950,300 1040,280 1130,290", "80,1100 200,1100 300,1090 380,1060 450,1060 490,1090", "200,1230 270,1210 380,1200 440,1190", "170,1220 200,1260 330,1270 380,1280", "18,1580 100,1540 160,1530", "18,1420 80,1410 160,1370 280,1350", "900,1030 920,1060 1000,1060 1060,1110 1100,1190 1170,1230 1160,1280", "1060,1340 1000,1420 980,1500 1000,1600 1040,1660 1140,1720", "960,1360 960,1450 900,1520 860,1590 850,1700", "680,1640 760,1600 860,1590 930,1700 1000,1790 1090,1860 1180,1900 1220,1960", "850,1700 860,1800 890,1880 940,1960 980,2010", "980,2010 1060,2000 1180,1990 1293,1970", "980,2010 1060,1930 1110,1880 1210,1780 1293,1790", "980,2010 870,2020 750,2020 680,2040 560,2075 490,2110", "980,2010 1080,2080 1180,2130 1150,2271", "980,2010 880,2160 800,2200 760,2271", "490,2110 540,2170 590,2240 600,2271", "490,2110 440,2200 430,2271", "490,2075 370,2065 270,2020 290,1960 200,1880", "75,1920 100,2040 120,2180 130,2271", "240,1640 180,1700 120,1740 18,1730", "380,1900 460,1840 550,1840 620,1870 640,1800", "620,1870 720,1800 760,1720 850,1700", "600,1790 660,1700 700,1660", "18,1890 50,1915 150,1910 160,1850 200,1800", "460,1800 480,1840 470,1900 490,2060", "460,1360 480,1450 560,1460 650,1510 760,1510 850,1460", "1220,1390 1240,1440 1170,1480 1150,1590", "1170,1390 1100,1480 1060,1560 1050,1620", "1220,1970 1293,2050", "1220,1970 1170,2020 1180,2100"]
    .forEach(s => line(r, s, "#f9cf94", 4, .09));
  ["145,192 200,210 255,200 320,235 345,270 400,285 460,295 510,295 560,280 620,285 665,250 715,205 740,192", "475,430 520,420 560,425 620,435 690,448 730,452 765,435", "465,440 430,520 385,580 345,600 320,650 298,700 295,800 330,840 360,900 400,940", "1232,192 1230,300 1215,430 1200,510 1225,560 1205,620", "1110,830 1130,880 1150,930 1165,990 1160,1060 1190,1140 1195,1230 1230,1300 1245,1340", "740,1340 800,1340 880,1350 960,1360 1080,1370 1200,1385", "850,345 900,345 930,370", "1160,745 1250,775 1293,780", "690,980 660,1030 650,1060", "18,1095 60,1110 110,1140", "250,1690 180,1700 100,1690", "1293,1340 1200,1390"]
    .forEach(s => line(r, s, "#f9a48e", 5, .07));
  ["18,990 60,1040 95,1080 100,1130 130,1230 200,1235 235,1260 260,1300 320,1400 350,1440 390,1560", "400,940 400,985 340,1050 320,1120 295,1190 285,1230 265,1265", "1293,968 1200,1030 1130,1090 1050,1130 980,1180 880,1215 800,1240 730,1300 650,1350 560,1400 450,1470 400,1560", "440,1600 560,1610 660,1620 750,1680 830,1705 950,1705 1050,1725 1150,1755 1293,1775", "430,1600 460,1650 500,1740 540,1820 570,1880 610,1960 630,2020 680,2120 720,2190 760,2271", "18,1595 80,1590 160,1560 240,1540 320,1550 400,1560", "400,1600 265,1750 200,1800 130,1880 90,1940 60,2030 50,2090 18,2120", "310,1440 300,1560 310,1640 350,1690 440,1660 510,1620 530,1580 520,1500 480,1440 400,1400 330,1400 310,1440", "560,1500 630,1490", "630,1400 680,1410 710,1440", "740,1400 780,1380 800,1330", "1170,1400 1200,1350 1250,1350 1240,1390 1170,1400", "420,1400 410,1300 460,1200", "460,1340 560,1400"]
    .forEach(s => line(r, s, "#e8819e", 5.5, .05));

  // --- labels ---
  const lab = layer("labels");
  const town = (x, y, s, size) => el(lab, "text", { x, y, "text-anchor": "middle", "font-size": size || 24.5, fill: "#444", stroke: "#fff", "stroke-width": 3, "stroke-opacity": .7, "paint-order": "stroke" }, s);
  const forest = (x, y, gap, lines) => lines.forEach((s, i) =>
    el(lab, "text", { x, y: y + i * gap, "text-anchor": "middle", "font-size": 25.5, "font-style": "italic", fill: "#1d8128", stroke: "#f2efe9", "stroke-width": 3, "paint-order": "stroke" }, s));
  forest(255, 244, 27, ["Cherokee", "National", "Forest"]);
  forest(222, 378, 32.5, ["Chattahoochee-", "Oconee", "National", "Forest (Conasauga", "District)"]);
  forest(439, 502, 32.5, ["Chattahoochee-", "Oconee", "National", "Forest (Blue", "Ridge District)"]);
  forest(1142, 204, 32.3, ["Nantahala", "National", "Forest (Nanta.", "Ranger", "District)"]);
  [["Murphy", 694, 231], ["Hayesville", 874, 273], ["Toccoa", 1277, 745], ["Gainesville", 868, 1026], ["Canton", 316, 1088], ["Holly Springs", 308, 1151], ["Cartersville", 55, 1160], ["Milton", 474, 1192], ["Woodstock", 292, 1224], ["Acworth", 163, 1258], ["Kennesaw", 213, 1301], ["Braselton", 919, 1215], ["Jefferson", 1076, 1209], ["Winder", 956, 1333], ["Lawrenceville", 733, 1368], ["Duluth", 612, 1320], ["Athens", 1239, 1365, 28], ["Dallas", 25, 1400], ["Sandy Springs", 409, 1401, 27], ["Smyrna", 297, 1442, 28], ["Lilburn", 605, 1434], ["Brookhaven", 440, 1465], ["Snellville", 706, 1467], ["Mableton", 241, 1505], ["Decatur", 535, 1514], ["Monroe", 960, 1528], ["Douglasville", 104, 1572], ["Redan", 586, 1568], ["Stonecrest", 610, 1640], ["East Point", 354, 1642], ["Forest Park", 417, 1699], ["South Fulton", 167, 1733], ["Covington", 838, 1726], ["Stockbridge", 529, 1778], ["Fayetteville", 353, 1873], ["McDonough", 601, 1874], ["Peachtree City", 230, 1926, 28], ["Newnan", 64, 1940], ["Griffin", 504, 2073]]
    .forEach(a => town(a[1], a[2], a[0], a[3]));

  // --- basin overlays ---
  const o = layer("overlays");
  let clipId = 0;
  const basin = (s, color, width, fill, fillOp, streams) => {
    const poly = parse(s);
    const d = toD(rough(poly.concat([poly[0]]), .11, 12), true);
    el(o, "path", { d, fill: fill || color, "fill-opacity": fillOp });
    const id = "basin" + clipId++;
    el(el(o, "clipPath", { id }), "path", { d });
    if (!streams) { el(o, "path", { d, fill: "none", stroke: color, "stroke-width": width, "stroke-linejoin": "round" }); return; }
    el(o, "path", { d, fill: "none", stroke: color, "stroke-width": width, "stroke-linejoin": "round" });
    drawStreams(poly, streams, id);
  };
  // Each node on a jittered grid drains into a neighbour, giving branching channels.
  function drawStreams(poly, c, id) {
    const g = el(o, "g", { "clip-path": `url(#${id})` });
    const jit = {}, at = (i, j) => jit[i + "," + j] || (jit[i + "," + j] = [i * c.step + sym(c.step * .38), j * c.step + sym(c.step * .38)]);
    let d = "";
    const xs = poly.map(p => p[0]), ys = poly.map(p => p[1]);
    for (let i = Math.floor(Math.min(...xs) / c.step); i * c.step < Math.max(...xs); i++)
      for (let j = Math.floor(Math.min(...ys) / c.step); j * c.step < Math.max(...ys); j++) {
        const p = at(i, j);
        if (!inside(p[0], p[1], poly)) continue;
        const base = Math.atan2(c.sink[1] - p[1], c.sink[0] - p[0]) + sym(c.spread || 1.35);
        const q = at(i + Math.round(Math.cos(base)), j + Math.round(Math.sin(base)));
        if (!inside(q[0], q[1], poly)) continue;
        d += `M${p[0].toFixed(1)} ${p[1].toFixed(1)}Q${((p[0] + q[0]) / 2 + sym(9)).toFixed(1)} ${((p[1] + q[1]) / 2 + sym(9)).toFixed(1)} ${q[0].toFixed(1)} ${q[1].toFixed(1)}`;
      }
    el(g, "path", { d, fill: "none", stroke: "#4682b4", "stroke-width": c.width, "stroke-linecap": "round" });
  }
  const main = "890,488 930,500 965,520 1000,510 1010,488 1070,485 1095,550 1120,578 1170,590 1205,620 1208,655 1190,685 1215,710 1210,740 1180,765 1165,790 1100,835 1070,860 1050,885 990,935 940,945 905,975 895,1010 870,1025 870,1060 850,1090 820,1120 785,1165 775,1200 795,1235 785,1265 750,1275 710,1285 670,1315 650,1305 600,1325 560,1355 540,1380 500,1378 470,1372 440,1385 400,1405 375,1420 358,1438 345,1410 325,1380 290,1372 262,1355 285,1320 310,1295 340,1280 345,1255 380,1255 410,1240 440,1218 490,1220 515,1185 520,1140 495,1090 515,1072 555,1080 630,1065 660,1035 690,1015 680,960 710,935 720,905 700,870 705,800 680,780 665,735 685,700 690,655 730,620 735,590 770,572 820,580 860,585 865,520";
  const mp = parse(main);
  basin(main, "#da70d6", 17, "#da70d6", .4);
  const upper = mp.map(p => [p[0], Math.min(p[1], 1000)]), lower = mp.map(p => [p[0], Math.max(p[1], 975)]);
  drawStreams(upper, { step: 20, width: 11.5, sink: [800, 1010], spread: 1.5 }, "basin0");
  drawStreams(upper, { step: 28, width: 11.5, sink: [760, 1010], spread: 2 }, "basin0");
  drawStreams(lower, { step: 24, width: 11, sink: [350, 1440], spread: 1.6 }, "basin0");
  drawStreams(lower, { step: 36, width: 10.5, sink: [350, 1440], spread: 2.2 }, "basin0");
  line(o, "865,960 780,1010 740,1090 690,1160 610,1200 560,1260 470,1300 400,1350 358,1425", "#4682b4", 13, .12);

  basin("365,1490 400,1465 430,1455 470,1480 530,1470 555,1460 565,1490 540,1510 515,1545 470,1555 420,1570 395,1560 380,1520", "#9400d3", 13, "#c03a9a", .55, { step: 19, width: 9, sink: [390, 1500] });
  el(o, "path", { d: "M398 1512l30-8 12 26-20 22-24-8z", fill: "#c850b0", opacity: .9 });
  basin("540,1382 553,1400 545,1455 520,1475 470,1502 434,1490 444,1450 490,1407", "#ffff00", 16, "#b8b04a", .8);
  line(o, "455,1475 480,1450 505,1445 530,1410", "#7fa565", 15, .15);
  basin("265,1520 278,1553 300,1550 345,1555 378,1590 365,1610 350,1642 320,1628 280,1630 254,1600 250,1565", "#0000ff", 16, "#3d3fe0", .65);
  line(o, "265,1570 290,1600 330,1595 350,1615", "#4a6fd0", 9, .2); line(o, "275,1560 285,1610 320,1620", "#4a6fd0", 7, .2);
  basin("314,1507 335,1505 350,1520 385,1525 398,1560 388,1576 350,1561 332,1540", "#00ffff", 15, "#58c9d0", .7);
  line(o, "335,1525 360,1545 380,1565", "#4682b4", 9, .2);
  basin("398,1580 435,1569 456,1605 453,1635 415,1602", "#ffa500", 12, "#ffa500", .25);
  line(o, "420,1580 435,1610", "#777", 5, .1);
  basin("345,1655 400,1655 410,1685 448,1700 440,1740 432,1790 452,1866 400,1902 382,1860 350,1835 305,1800 330,1750", "#cd853f", 15, "#cd853f", .4, { step: 23, width: 11, sink: [400, 1900] });
  line(o, "395,1690 405,1760 430,1710 400,1800 415,1850 402,1900", "#4682b4", 12, .1);
  basin("267,1710 305,1690 345,1692 378,1720 380,1810 335,1795 300,1778 270,1755", "#800000", 15, "#803040", .55);
  drawStreams(parse("280,1715 330,1700 330,1780 285,1755"), { step: 15, width: 9, sink: [340, 1780] }, "basin" + (clipId - 1));
  basin("334,1700 355,1697 378,1720 380,1810 350,1783 337,1750", "#800000", 16, "#684060", .8);
  line(o, "352,1715 360,1750 370,1785", "#5a5a88", 9, .2);
  basin("362,1622 380,1616 388,1625 384,1656 356,1643", "#32cd32", 12, "#32cd32", .75);
})();
```
